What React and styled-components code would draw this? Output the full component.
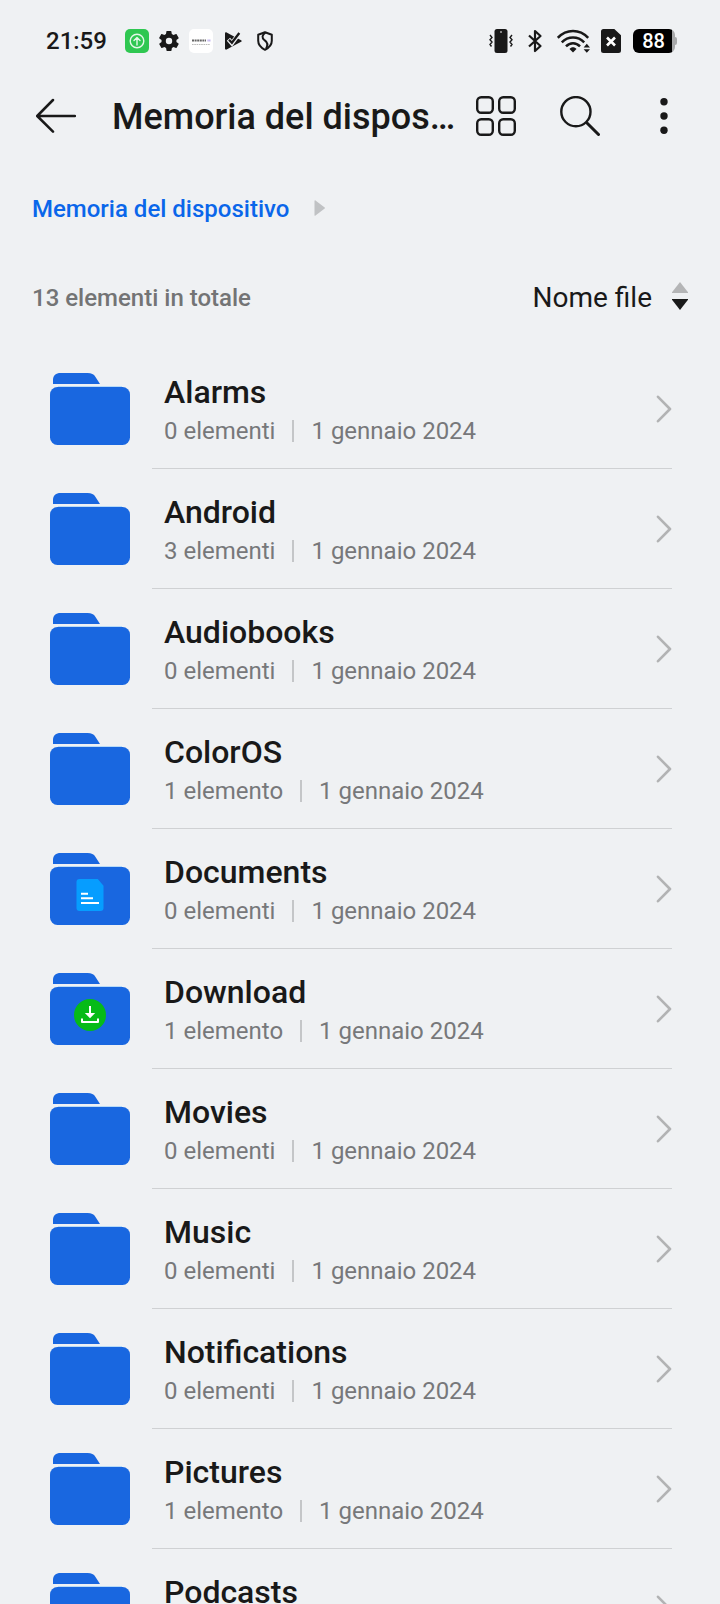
import React from "react";
import styled, { createGlobalStyle } from "styled-components";

const ink = "#191919";

const GlobalStyle = createGlobalStyle`
  *, *::before, *::after { box-sizing: border-box; }
  body { margin: 0; background: #eff1f3; color: ${ink}; font-family: Roboto, sans-serif; }
  h1, h2, p, ul { margin: 0; padding: 0; }
  svg { display: block; flex: none; }
`;

const Screen = styled.div`
  display: flex;
  flex-direction: column;
  height: 100vh;
  overflow: hidden;
`;

const StatusBar = styled.div`
  display: flex;
  flex: none;
  align-items: center;
  justify-content: space-between;
  height: 80px;
  padding: 2px 45px 0 46px;
`;

const StatusGroup = styled.div`
  display: flex;
  align-items: center;
  gap: ${(p) => p.$gap}px;
`;

const Clock = styled.time`
  margin-right: 10px;
  font-size: 24px;
  line-height: 28px;
  font-weight: 500;
`;

const Battery = styled.div`
  position: relative;
  width: 42px;
  height: 24px;
  margin-left: 2px;
  padding-right: 1px;
  border-radius: 6px;
  background: linear-gradient(to right, #000 39px, #a8a9aa 39px);
  color: #fff;
  font-size: 20px;
  line-height: 24px;
  font-weight: 500;
  text-align: center;

  &::after {
    content: "";
    position: absolute;
    top: 8px;
    right: -2px;
    width: 2px;
    height: 8px;
    border-radius: 0 2px 2px 0;
    background: #a8a9aa;
  }
`;

const Toolbar = styled.header`
  display: flex;
  flex: none;
  align-items: center;
  height: 72px;
  padding: 0 36px;
`;

const Title = styled.h1`
  flex: 1;
  min-width: 0;
  margin: 0 20px 0 36px;
  padding-top: 2px;
  overflow: hidden;
  white-space: nowrap;
  text-overflow: ellipsis;
  font-size: 36px;
  line-height: 44px;
  font-weight: 500;
`;

const Actions = styled.div`
  display: flex;
  gap: 44px;
`;

const IconButton = styled.button`
  flex: none;
  width: 40px;
  height: 40px;
  padding: 0;
  border: 0;
  background: none;
  color: inherit;
  cursor: pointer;
`;

const Breadcrumb = styled.nav`
  display: flex;
  flex: none;
  align-items: center;
  gap: 24px;
  height: 114px;
  padding: 0 32px;
`;

const Crumb = styled.a`
  color: #0a66ea;
  font-size: 24px;
  line-height: 28px;
  font-weight: 500;
  text-decoration: none;
`;

const Summary = styled.div`
  display: flex;
  flex: none;
  align-items: center;
  justify-content: space-between;
  height: 64px;
  padding: 0 32px;
`;

const Total = styled.p`
  color: #737475;
  font-size: 24px;
  line-height: 28px;
  font-weight: 500;
`;

const SortButton = styled.button`
  display: flex;
  align-items: center;
  gap: 20px;
  padding: 0;
  border: 0;
  background: none;
  color: inherit;
  font-family: inherit;
  font-size: 28px;
  line-height: 32px;
  cursor: pointer;
`;

const FileList = styled.ul`
  flex: 1;
  min-height: 0;
  padding-top: 19px;
  overflow-y: auto;
  scrollbar-width: none;
  list-style: none;
`;

const Row = styled.a`
  display: flex;
  gap: 22px;
  height: 120px;
  padding: 0 48px 0 50px;
  color: inherit;
  text-decoration: none;

  > svg { margin-top: 24px; }
`;

const RowBody = styled.div`
  display: flex;
  flex: 1;
  align-items: center;
  justify-content: space-between;
  padding-left: 12px;
  border-bottom: 1px solid #cfd1d3;
`;

const FileInfo = styled.div`
  display: flex;
  flex-direction: column;
  gap: 6px;
`;

const FileName = styled.h2`
  font-size: 32px;
  line-height: 38px;
  font-weight: 500;
`;

const Meta = styled.p`
  display: flex;
  align-items: center;
  gap: 17px;
  color: #77787a;
  font-size: 24px;
  line-height: 28px;
`;

const Divider = styled.span`
  width: 2px;
  height: 22px;
  background: #c4c6c8;
`;

function UploadBadge() {
  return (
    <svg width="24" height="24" viewBox="0 0 24 24" fill="none" stroke="#e4f8e8" strokeWidth="1.4" strokeLinecap="round" strokeLinejoin="round">
      <rect width="24" height="24" rx="5" fill="#2fc751" stroke="none" />
      <circle cx="12" cy="12" r="6.8" />
      <path d="M12 16V8.6M9 11.4l3-3 3 3" />
    </svg>
  );
}

function GearIcon() {
  return (
    <svg width="24" height="24" viewBox="0 0 24 24" fill={ink}>
      <path d="M19.4 13c0-.3.1-.6.1-1s0-.7-.1-1l2.1-1.6c.2-.2.2-.4.1-.6l-2-3.5c-.1-.2-.4-.3-.6-.2l-2.5 1c-.5-.4-1.1-.7-1.7-1l-.4-2.6c0-.3-.2-.5-.5-.5h-4c-.2 0-.4.2-.5.4l-.4 2.7c-.6.2-1.1.6-1.7 1l-2.4-1c-.3-.1-.5 0-.7.2l-2 3.5c-.1.2 0 .4.2.6L4.6 11c0 .3-.1.6-.1 1s0 .7.1 1l-2.1 1.6c-.2.2-.3.4-.2.6l2 3.5c.1.2.4.3.6.2l2.5-1c.5.4 1.1.7 1.7 1l.4 2.6c0 .3.2.5.5.5h4c.2 0 .5-.2.5-.5l.4-2.6c.6-.2 1.1-.6 1.7-1l2.4 1c.3.1.5 0 .6-.2l2-3.5c.1-.2.1-.4-.1-.6L19.4 13zM12 15.2a3.2 3.2 0 1 1 0-6.4 3.2 3.2 0 0 1 0 6.4z" />
    </svg>
  );
}

function AppTile() {
  return (
    <svg width="24" height="24" viewBox="0 0 24 24" fill="none">
      <rect width="24" height="24" rx="5" fill="#fff" />
      <path d="M3 11.5h14" stroke="#666" strokeWidth="2" strokeDasharray="2 .6" />
      <path d="M18.5 11.5h3" stroke="#b6a6ea" strokeWidth="2" strokeDasharray="1.2 .5" />
      <path d="M3 15.5h18" stroke="#bbb" strokeWidth="1" strokeDasharray="1.6 .7" />
    </svg>
  );
}

function PlayCheckIcon() {
  return (
    <svg width="24" height="24" viewBox="-4 -3 24 24">
      <path d="M0 1.5C0 .6.8.1 1.6.5l14.500 7.700c.8.500.8 1.100 0 1.600L1.600 17.600C.8 18 0 17.500 0 16.600z" fill={ink} />
      <path d="M3.400 7.200l3.500 4L16 -1" fill="none" stroke="#eff1f3" strokeWidth="4.400" />
      <path d="M4 7.800l2.900 3L14.300 1" fill="none" stroke={ink} strokeWidth="2.300" />
    </svg>
  );
}

function ShieldIcon() {
  return (
    <svg width="24" height="24" viewBox="-4 -2 24 24" fill="none" stroke={ink} strokeWidth="2" strokeLinejoin="round">
      <path d="M8 1.2L14.800 3.800v6c0 4-2.800 7-6.800 9-4-2-6.800-5-6.800-9v-6z" />
      <path d="M8.500 1.500C5 4 4.500 7 7.500 9.200c3.500 2.300 3.500 5.300 1.500 8.600" />
    </svg>
  );
}

function VibrateIcon() {
  return (
    <svg width="24" height="24" viewBox="0 0 24 24" fill="none">
      <rect x="5.500" width="13" height="24" rx="2.500" fill={ink} />
      <circle cx="12" cy="3" r="1" fill="#aaa" />
      <path d="M1 6l2 2.500-2 2.300L3 13l-2 2.500 1.500 2M23 6l-2 2.500 2 2.300-2 2.200 2 2.500-1.500 2" stroke={ink} strokeWidth="1.400" />
    </svg>
  );
}

function BluetoothIcon() {
  return (
    <svg width="24" height="24" viewBox="-5 0 24 24" fill="none" stroke={ink} strokeWidth="2.200" strokeLinejoin="round">
      <path d="M1 6.500L12.500 17 7 22V2l5.500 5L1 17.500" />
    </svg>
  );
}

function WifiIcon() {
  return (
    <svg width="34" height="24" viewBox="0 0 34 24" fill="none" stroke={ink} strokeWidth="2.500">
      <path d="M.8 8.800C9.500-.3 22.500-.3 31.200 8.800M4.800 13.300c6.300-6.500 16.100-6.500 22.400 0M9 17.300c4-4.200 10-4.200 14 0" />
      <path d="M12.500 20c1.800-2.300 5.200-2.300 7 0L16 23.600z" fill={ink} stroke="none" />
      <path d="M26.600 18.500l3.200-3.700 3.200 3.700zM26.600 20.200l3.200 3.600 3.200-3.600z" fill={ink} stroke="none" />
    </svg>
  );
}

function SimErrorIcon() {
  return (
    <svg width="20" height="24" viewBox="0 0 20 24">
      <path d="M2.500 0h10.800L20 6.300v15.200a2.500 2.500 0 0 1-2.500 2.500h-15A2.500 2.500 0 0 1 0 21.500v-19A2.500 2.500 0 0 1 2.500 0z" fill={ink} />
      <path d="M6 8.500l8 8M14 8.500l-8 8" stroke="#fff" strokeWidth="2.600" />
    </svg>
  );
}

function BackIcon() {
  return (
    <svg width="40" height="40" viewBox="0 0 40 40" fill="none" stroke={ink} strokeWidth="2.500" strokeLinecap="round" strokeLinejoin="round">
      <path d="M39 20H1.500M17 4L1.200 20 17 35.700" />
    </svg>
  );
}

function GridIcon() {
  return (
    <svg width="40" height="40" viewBox="0 0 40 40" fill="none" stroke={ink} strokeWidth="2.400">
      <rect x="1.200" y="1.200" width="15.600" height="15.600" rx="4" />
      <rect x="23.200" y="1.200" width="15.600" height="15.600" rx="4" />
      <rect x="1.200" y="23.200" width="15.600" height="15.600" rx="4" />
      <rect x="23.200" y="23.200" width="15.600" height="15.600" rx="4" />
    </svg>
  );
}

function SearchIcon() {
  return (
    <svg width="40" height="40" viewBox="0 0 40 40" fill="none" stroke={ink} strokeLinecap="round">
      <circle cx="15.900" cy="15.700" r="14.600" strokeWidth="2.400" />
      <path d="M27 27l11.500 11.500" strokeWidth="3" />
    </svg>
  );
}

function MoreIcon() {
  return (
    <svg width="40" height="40" viewBox="0 0 40 40" fill={ink}>
      <circle cx="20" cy="5.800" r="3.700" />
      <circle cx="20" cy="20" r="3.700" />
      <circle cx="20" cy="34.200" r="3.700" />
    </svg>
  );
}

function CrumbArrow() {
  return (
    <svg width="12" height="18" viewBox="0 0 12 18">
      <path d="M1.500.8c0-.6.600-.8 1-.4l9.200 7c.4.300.4.900 0 1.200l-9.200 7c-.4.400-1 .200-1-.4z" fill="#c0c2c4" />
    </svg>
  );
}

function SortIcon() {
  return (
    <svg width="16" height="32" viewBox="0 0 16 32">
      <path d="M8 0l8 10.200v.8H0v-.8z" fill="#b4b5b6" />
      <path d="M8 28l8-10.200V17H0v.8z" fill={ink} />
    </svg>
  );
}

function Chevron() {
  return (
    <svg width="16" height="28" viewBox="0 0 16 28" fill="none" stroke="#b2b3b4" strokeWidth="2.600" strokeLinecap="round" strokeLinejoin="round">
      <path d="M2 1.800L14 14 2 26.200" />
    </svg>
  );
}

function FolderIcon({ kind }) {
  return (
    <svg width="80" height="72" viewBox="0 0 80 72">
      <path d="M3 11V7c0-4.500 3-7 7.500-7h27c4 0 6.300 1 8 4l4.500 7z" fill="#1967e0" />
      <path d="M8 13.500h64" stroke="#b8dbf8" strokeWidth="1" />
      <rect y="14" width="80" height="58" rx="7.500" fill="#1967e0" />
      {kind === "document" && (
        <>
          <path d="M29.500 26h18.300l5.700 6.700V55a3 3 0 0 1-3 3h-21a3 3 0 0 1-3-3V29a3 3 0 0 1 3-3z" fill="#069dff" />
          <path d="M31 40.700h7M31 45.300h12M31 50h18" stroke="#fff" strokeWidth="2" />
        </>
      )}
      {kind === "download" && (
        <>
          <circle cx="40" cy="42" r="16" fill="#06bb17" />
          <path d="M40 33v9M32 45.500V49h16v-3.500" fill="none" stroke="#fff" strokeWidth="2" strokeLinejoin="round" />
          <path d="M34.800 40h10.400L40 45.200z" fill="#fff" />
        </>
      )}
    </svg>
  );
}

const files = [
  { name: "Alarms", count: "0 elementi" },
  { name: "Android", count: "3 elementi" },
  { name: "Audiobooks", count: "0 elementi" },
  { name: "ColorOS", count: "1 elemento" },
  { name: "Documents", count: "0 elementi", kind: "document" },
  { name: "Download", count: "1 elemento", kind: "download" },
  { name: "Movies", count: "0 elementi" },
  { name: "Music", count: "0 elementi" },
  { name: "Notifications", count: "0 elementi" },
  { name: "Pictures", count: "1 elemento" },
  { name: "Podcasts", count: "0 elementi" },
];

export default function App() {
  return (
    <>
      <GlobalStyle />
      <Screen>
        <StatusBar>
          <StatusGroup $gap={8}>
            <Clock>21:59</Clock>
            <UploadBadge />
            <GearIcon />
            <AppTile />
            <PlayCheckIcon />
            <ShieldIcon />
          </StatusGroup>
          <StatusGroup $gap={10}>
            <VibrateIcon />
            <BluetoothIcon />
            <WifiIcon />
            <SimErrorIcon />
            <Battery>88</Battery>
          </StatusGroup>
        </StatusBar>
        <Toolbar>
          <IconButton aria-label="Indietro"><BackIcon /></IconButton>
          <Title>Memoria del dispositivo</Title>
          <Actions>
            <IconButton aria-label="Griglia"><GridIcon /></IconButton>
            <IconButton aria-label="Cerca"><SearchIcon /></IconButton>
            <IconButton aria-label="Altro"><MoreIcon /></IconButton>
          </Actions>
        </Toolbar>
        <Breadcrumb>
          <Crumb href="#">Memoria del dispositivo</Crumb>
          <CrumbArrow />
        </Breadcrumb>
        <Summary>
          <Total>13 elementi in totale</Total>
          <SortButton>
            Nome file
            <SortIcon />
          </SortButton>
        </Summary>
        <FileList>
          {files.map((file) => (
            <li key={file.name}>
              <Row href={`#${file.name}`}>
                <FolderIcon kind={file.kind} />
                <RowBody>
                  <FileInfo>
                    <FileName>{file.name}</FileName>
                    <Meta>
                      <span>{file.count}</span>
                      <Divider />
                      <span>1 gennaio 2024</span>
                    </Meta>
                  </FileInfo>
                  <Chevron />
                </RowBody>
              </Row>
            </li>
          ))}
        </FileList>
      </Screen>
    </>
  );
}
